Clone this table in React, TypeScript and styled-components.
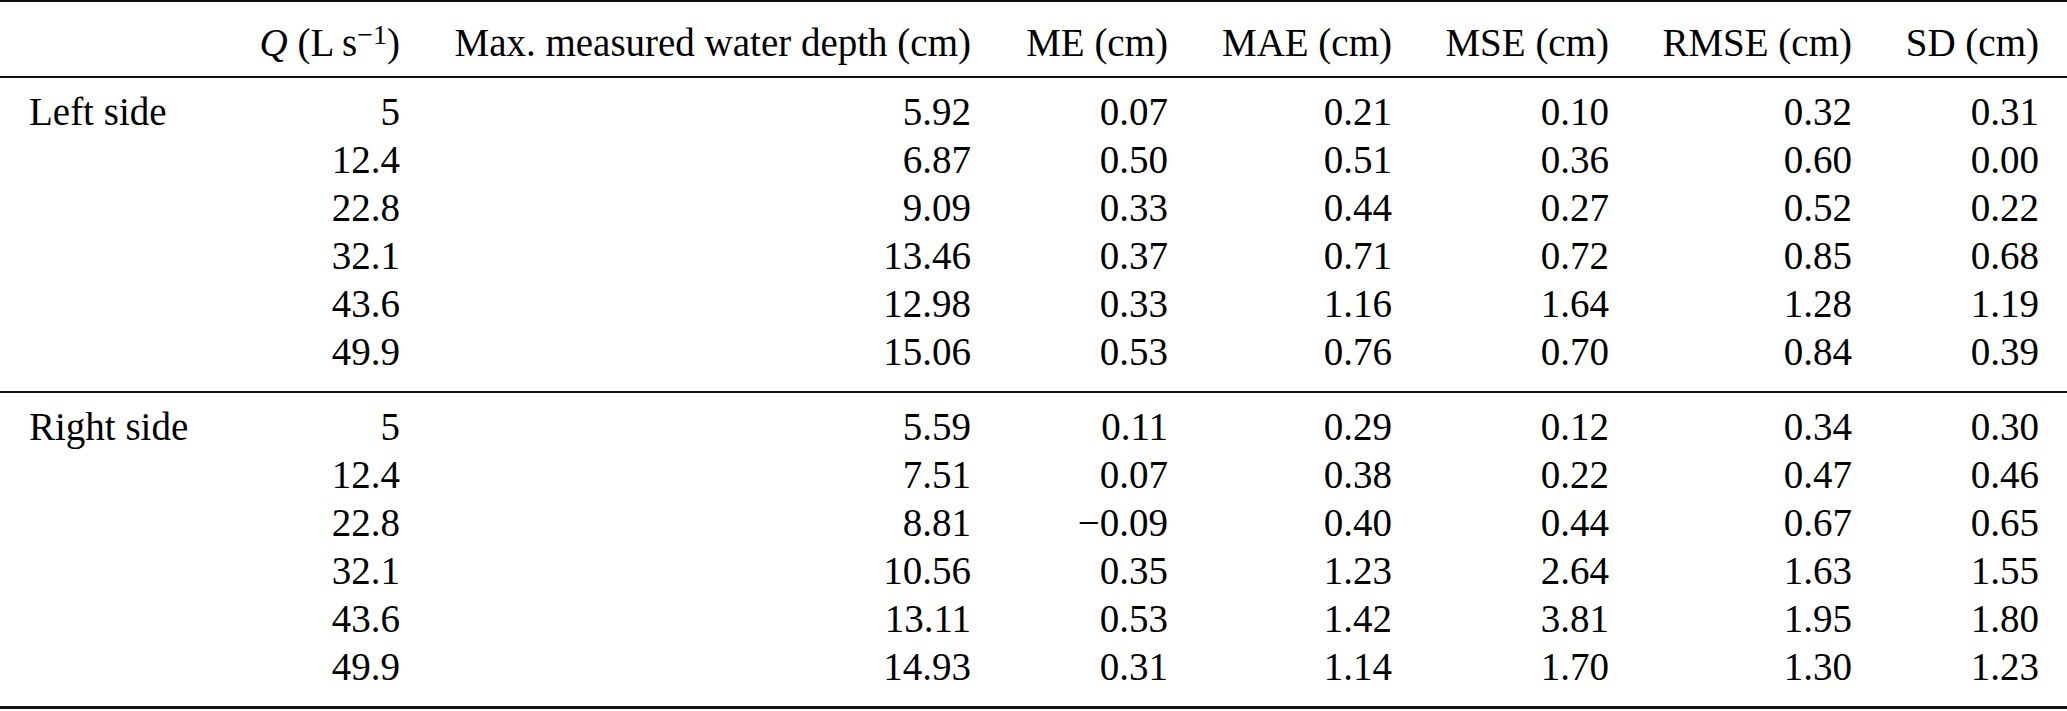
import React from 'react';
import styled, { createGlobalStyle } from 'styled-components';

const GlobalStyle = createGlobalStyle`
  html, body {
    margin: 0;
    padding: 0;
    background: #fff;
  }
`;

// column right edges sit at 400, 971, 1168, 1392, 1609, 1852, 2039
const COLS = '200px 200px 571px 197px 224px 217px 243px 187px';

const Table = styled.div`
  width: 2067px;
  font-family: "Liberation Serif", "Times New Roman", serif;
  font-size: 39px;
  color: #000;
  border-top: 2px solid #111;
  border-bottom: 3px solid #111;
`;

const Header = styled.div`
  display: grid;
  grid-template-columns: ${COLS};
  height: 76px;
  padding-top: 6px;
  box-sizing: border-box;
  line-height: 70px;
  border-bottom: 2px solid #111;
`;

const Block = styled.div<{ $last?: boolean }>`
  padding: 10px 0 15px;
  border-bottom: ${(p) => (p.$last ? 'none' : '2px solid #111')};
`;

const Row = styled.div`
  display: grid;
  grid-template-columns: ${COLS};
  height: 48px;
  line-height: 48px;
`;

const Label = styled.div`
  padding-left: 29px;
  white-space: nowrap;
`;

const Num = styled.div`
  text-align: right;
  white-space: nowrap;
`;

const Sup = styled.sup`
  font-size: 28px;
  line-height: 0;
  vertical-align: 12px;
`;

const Ital = styled.i`
  font-style: italic;
`;

const heads = [
  'Max. measured water depth (cm)',
  'ME (cm)',
  'MAE (cm)',
  'MSE (cm)',
  'RMSE (cm)',
  'SD (cm)',
];

const left = [
  ['5', '5.92', '0.07', '0.21', '0.10', '0.32', '0.31'],
  ['12.4', '6.87', '0.50', '0.51', '0.36', '0.60', '0.00'],
  ['22.8', '9.09', '0.33', '0.44', '0.27', '0.52', '0.22'],
  ['32.1', '13.46', '0.37', '0.71', '0.72', '0.85', '0.68'],
  ['43.6', '12.98', '0.33', '1.16', '1.64', '1.28', '1.19'],
  ['49.9', '15.06', '0.53', '0.76', '0.70', '0.84', '0.39'],
];

const right = [
  ['5', '5.59', '0.11', '0.29', '0.12', '0.34', '0.30'],
  ['12.4', '7.51', '0.07', '0.38', '0.22', '0.47', '0.46'],
  ['22.8', '8.81', '\u22120.09', '0.40', '0.44', '0.67', '0.65'],
  ['32.1', '10.56', '0.35', '1.23', '2.64', '1.63', '1.55'],
  ['43.6', '13.11', '0.53', '1.42', '3.81', '1.95', '1.80'],
  ['49.9', '14.93', '0.31', '1.14', '1.70', '1.30', '1.23'],
];

const Section = ({ name, rows, last }: { name: string; rows: string[][]; last?: boolean }) => (
  <Block $last={last}>
    {rows.map((r, i) => (
      <Row key={i}>
        <Label>{i === 0 ? name : ''}</Label>
        {r.map((v, j) => (
          <Num key={j}>{v}</Num>
        ))}
      </Row>
    ))}
  </Block>
);

export default function App() {
  return (
    <>
      <GlobalStyle />
      <Table>
        <Header>
          <Label />
          <Num>
            <Ital>Q</Ital> (L{'\u2009'}s<Sup>{'\u2212'}1</Sup>)
          </Num>
          {heads.map((h) => (
            <Num key={h}>{h}</Num>
          ))}
        </Header>
        <Section name="Left side" rows={left} />
        <Section name="Right side" rows={right} last />
      </Table>
    </>
  );
}
